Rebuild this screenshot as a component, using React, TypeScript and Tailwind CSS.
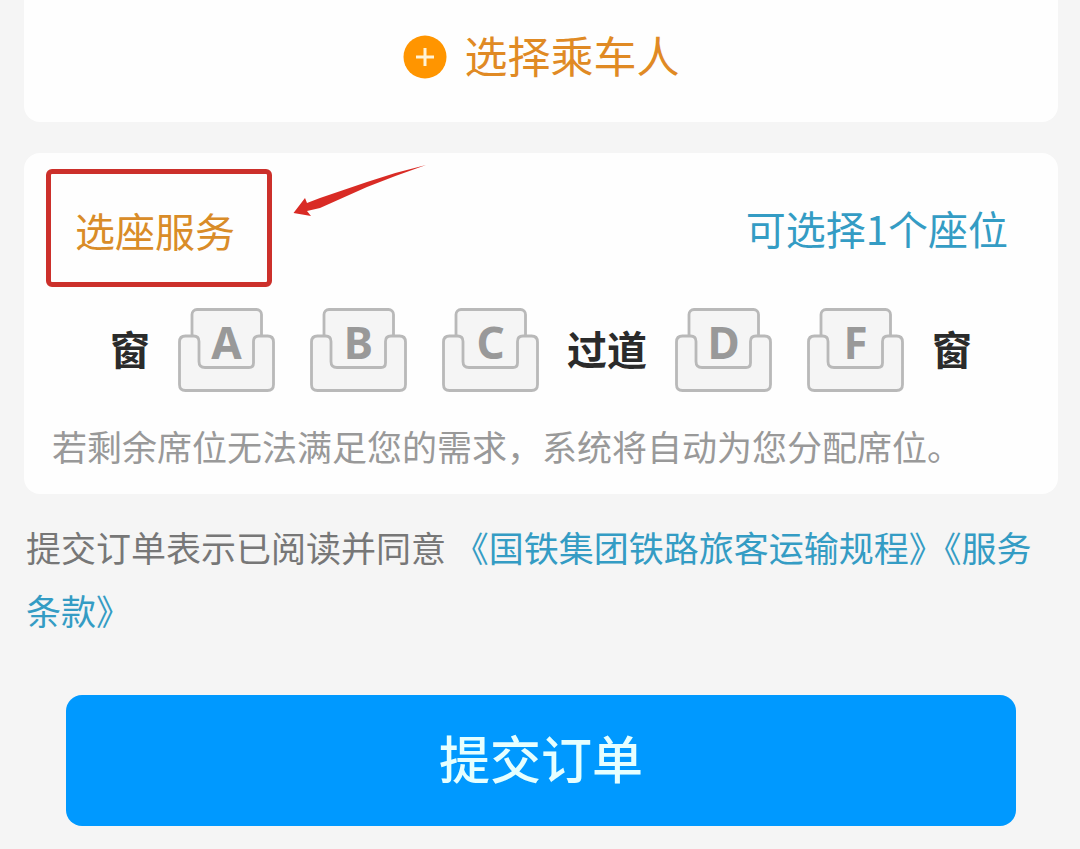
import React, { useState } from 'react';

const leftSeats = ['A', 'B', 'C'];
const rightSeats = ['D', 'F'];

const Seat: React.FC<{ letter: string; active: boolean; onSelect: () => void }> = ({ letter, active, onSelect }) => (
  <button
    type="button"
    aria-pressed={active}
    onClick={onSelect}
    className={`relative w-[97px] h-[84px] ${active ? 'text-[#0099ff]' : 'text-[#999999]'}`}
  >
    <svg viewBox="0 0 97 84" className="w-full h-full" fill="#f5f5f5" stroke="#b9b9b9" strokeWidth="2.8" aria-hidden="true">
      <rect x="14" y="1.5" width="69.5" height="62" rx="5" />
      <path d="M7.5 28H15.500Q21 28 21 33.500V53.500Q21 59.500 27 59.500H71Q75.500 59.500 75.500 55V33.500Q75.500 28 81 28H89.500Q95.500 28 95.500 34V76.500Q95.500 82.500 89.500 82.500H7.500Q1.500 82.500 1.500 76.500V34Q1.500 28 7.500 28Z" />
    </svg>
    <span className="absolute inset-x-0 top-1 font-['Noto_Sans'] font-bold text-[44px] leading-[60px]">
      {letter}
    </span>
  </button>
);

export default function App() {
  const [seat, setSeat] = useState<string | null>(null);

  const renderSeats = (letters: string[]) => (
    <div className="flex gap-[35px]">
      {letters.map((letter) => (
        <Seat key={letter} letter={letter} active={seat === letter} onSelect={() => setSeat(letter)} />
      ))}
    </div>
  );

  return (
    <main className="min-h-screen bg-[#f5f5f5] pl-6 pr-[22px] pb-6 font-['Noto_Sans_CJK_SC',sans-serif]">
      <section className="bg-[#fefefe] rounded-b-2xl h-[122px] pb-2 flex items-center justify-center">
        <button type="button" className="flex items-center gap-[18px] text-[43px] leading-[60px] text-[#e08a24]">
          <svg viewBox="0 0 44 44" className="w-11 h-11" aria-hidden="true">
            <circle cx="22" cy="22" r="21.5" fill="#ff9500" />
            <path d="M22 13v18M13 22h18" stroke="#fff3d6" strokeWidth="3" />
          </svg>
          <span className="pb-1.5">选择乘车人</span>
        </button>
      </section>

      <section className="relative mt-[31px] bg-[#fefefe] rounded-2xl pt-4 pb-[18px]">
        <div className="flex items-center justify-between pl-[22px] pr-[50px]">
          <h2 className="w-[226px] h-[118px] pt-1 pl-6 flex items-center border-[5px] border-[#cc302b] rounded-md text-[40px] leading-[60px] text-[#d98c28]">
            选座服务
          </h2>
          <p className="text-[40px] leading-[60px] text-[#349cc4]">可选择1个座位</p>
        </div>

        <svg viewBox="0 0 134 54" className="absolute left-[269px] top-[11px] w-[134px] h-[54px]" aria-hidden="true">
          <path d="M133 1Q103 8 74 18L27 34L14 39L12 34L0.500 49L18 52L14 47L27 44L74 23Q104 11 133 1Z" fill="#d92b25" />
        </svg>

        <div className="mt-[21px] flex items-center justify-center gap-7 text-[40px] leading-[60px] font-bold text-[#2b2b2b]">
          <span className="pb-1">窗</span>
          {renderSeats(leftSeats)}
          <span className="pb-1">过道</span>
          {renderSeats(rightSeats)}
          <span className="pb-1">窗</span>
        </div>

        <p className="mt-6 pl-7 text-[35px] leading-[60px] text-[#999999]">
          若剩余席位无法满足您的需求，系统将自动为您分配席位。
        </p>
      </section>

      <p className="mt-[21px] pl-0.5 text-[35px] leading-[63px] text-[#777777]">
        提交订单表示已阅读并同意{' '}
        <a href="#transport" className="text-[#349cc4]">《国铁集团铁路旅客运输规程》</a>
        <a href="#terms" className="text-[#349cc4]">《服务条款》</a>
      </p>

      <div className="mt-[54px] px-[42px]">
        <button
          type="button"
          className="w-full h-[131px] pb-2 rounded-2xl bg-[#0099ff] text-[51px] leading-[60px] font-medium text-[#e6ffff]"
        >
          提交订单
        </button>
      </div>
    </main>
  );
}
